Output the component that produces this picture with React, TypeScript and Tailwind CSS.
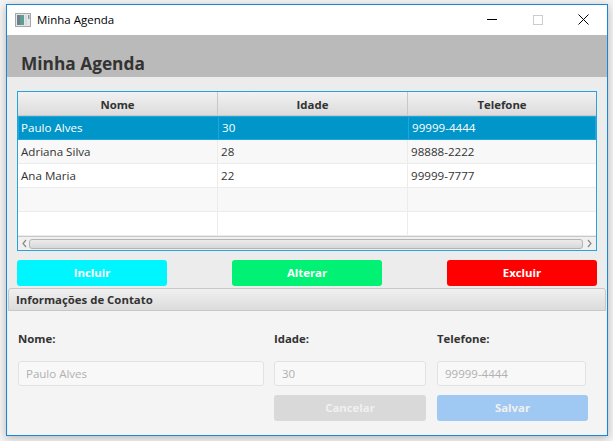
const font = 'font-["Open_Sans","Noto_Sans",sans-serif]';

const rows = [
  ['Paulo Alves', '30', '99999-4444'],
  ['Adriana Silva', '28', '98888-2222'],
  ['Ana Maria', '22', '99999-7777'],
  ['', '', ''],
  ['', '', ''],
];

function AppIcon() {
  return (
    <svg width="16" height="14" viewBox="0 0 16 14" className="shrink-0">
      <rect x="0.5" y="0.5" width="15" height="13" fill="#e6e6e6" stroke="#a8a8a8" />
      <rect x="2" y="2" width="7" height="10" fill="#5f9c94" />
      <rect x="2" y="2" width="3" height="10" fill="#6d7f8c" />
      <rect x="10" y="2" width="2" height="10" fill="#d4dbe0" />
      <rect x="13" y="2" width="1.5" height="4" fill="#8f9aa3" />
    </svg>
  );
}

function TitleBar() {
  return (
    <div className="flex h-[30px] items-center bg-white pl-[8px] pb-[1px]">
      <AppIcon />
      <span className="ml-[6px] text-[11.5px] text-black">Minha Agenda</span>
      <div className="ml-auto flex items-center pr-[18px]">
        <span className="h-px w-[10px] bg-black" />
        <span className="ml-[36px] h-[10px] w-[10px] border border-[#cccccc]" />
        <svg width="11" height="11" viewBox="0 0 11 11" className="ml-[35px]">
          <path d="M0.5 0.5 L10.5 10.5 M10.5 0.5 L0.5 10.5" stroke="#000000" strokeWidth="1" fill="none" />
        </svg>
      </div>
    </div>
  );
}

function Table() {
  return (
    <div className="flex h-[160px] flex-col border border-[#22a5dc] bg-white">
      <div className="grid h-[24px] grid-cols-[200px_190px_1fr] border-b border-[#c8c8c8] bg-gradient-to-b from-[#f2f2f2] to-[#dcdcdc] text-[11.4px] font-bold text-[#333333]">
        {['Nome', 'Idade', 'Telefone'].map((h, i) => (
          <div key={h} className={`flex items-center justify-center pt-[2px] ${i < 2 ? 'border-r border-[#c8c8c8]' : ''}`}>
            {h}
          </div>
        ))}
      </div>
      <div className="flex-1">
        {rows.map((r, i) => (
          <div
            key={i}
            className={`grid h-[24px] grid-cols-[200px_190px_1fr] text-[11.6px] ${
              i === 0
                ? 'border border-[#22a5dc] bg-[#0096c9] text-white'
                : i % 2 === 1
                  ? 'border-b border-[#ececec] bg-[#f8f8f8] text-[#333333]'
                  : 'border-b border-[#ececec] bg-white text-[#333333]'
            }`}
          >
            {r.map((c, j) => (
              <div
                key={j}
                className={`flex items-center ${i === 0 && j === 0 ? 'pl-[2px]' : 'pl-[3px]'} ${j < 2 ? (i === 0 ? 'border-r border-[#22a5dc]' : 'border-r border-[#ececec]') : ''}`}
              >
                {c}
              </div>
            ))}
          </div>
        ))}
      </div>
      <div className="flex h-[14px] items-center border-t border-[#c8c8c8] bg-[#f0f0f0] px-[3px]">
        <svg width="7" height="9" viewBox="0 0 7 9" className="shrink-0">
          <path d="M5 1 L2 4.5 L5 8" fill="none" stroke="#8a8a8a" strokeWidth="1.2" />
        </svg>
        <div className="ml-[1px] mr-[3px] h-[10px] flex-1 rounded-[3px] border border-[#b4b4b4] bg-gradient-to-b from-[#ececec] to-[#d8d8d8]" />
        <svg width="7" height="9" viewBox="0 0 7 9" className="shrink-0">
          <path d="M2 1 L5 4.5 L2 8" fill="none" stroke="#8a8a8a" strokeWidth="1.2" />
        </svg>
      </div>
    </div>
  );
}

function ActionButton({ label, color }: { label: string; color: string }) {
  return (
    <div className={`flex h-[26px] w-[150px] items-center justify-center rounded-[3px] text-[11.4px] font-bold text-white ${color}`}>
      {label}
    </div>
  );
}

function FormField({ label, value, width }: { label: string; value: string; width: string }) {
  return (
    <div className={`flex flex-col ${width}`}>
      <label className="flex h-[20px] items-center text-[11.4px] font-bold text-[#333333]">{label}</label>
      <div className="mt-[12px] flex h-[25px] items-center rounded-[3px] border border-[#e2e2e2] bg-[#f8f8f8] pl-[7px] text-[11.5px] text-[#b0b0b0]">
        {value}
      </div>
    </div>
  );
}

export default function App() {
  return (
    <div className={`h-[441px] w-[613px] overflow-hidden bg-[#f3f3f3] pl-[6px] pt-[4px] ${font}`}>
      <div className="flex h-[432px] w-[602px] flex-col border border-[#1b86d8] bg-[#ececec] shadow-[0_2px_8px_rgba(0,0,0,0.25)]">
        <TitleBar />
        <div className="flex h-[42px] items-end bg-[#bababa] pl-[14px] text-[17.3px] font-bold text-[#333333]">
          Minha Agenda
        </div>
        <div className="px-[10px] pt-[14px]">
          <Table />
          <div className="mt-[9px] flex justify-between">
            <ActionButton label="Incluir" color="bg-[#00f6ff]" />
            <ActionButton label="Alterar" color="bg-[#00f173]" />
            <ActionButton label="Excluir" color="bg-[#ff0000]" />
          </div>
        </div>
        <div className="ml-[1px] mr-[1px] mt-[2px] flex flex-1 flex-col">
          <div className="flex h-[23px] items-center rounded-t-[3px] border border-[#c8c8c8] bg-gradient-to-b from-[#f0f0f0] to-[#dcdcdc] pl-[7px] text-[11.4px] font-bold text-[#333333]">
            Informações de Contato
          </div>
          <div className="flex-1 bg-[#f4f4f4] pl-[10px] pt-[18px]">
            <div className="flex">
              <FormField label="Nome:" value="Paulo Alves" width="w-[246px]" />
              <div className="w-[10px]" />
              <FormField label="Idade:" value="30" width="w-[152px]" />
              <div className="w-[11px]" />
              <FormField label="Telefone:" value="99999-4444" width="w-[149px]" />
            </div>
            <div className="mt-[9px] flex pl-[256px]">
              <div className="flex h-[26px] w-[152px] items-center justify-center rounded-[3px] bg-[#d9d9d9] text-[11.4px] font-bold text-[#f0f0f0]">
                Cancelar
              </div>
              <div className="ml-[11px] flex h-[26px] w-[151px] items-center justify-center rounded-[3px] bg-[#9fc8f2] text-[11.4px] font-bold text-[#f0f0f0]">
                Salvar
              </div>
            </div>
          </div>
        </div>
      </div>
    </div>
  );
}
